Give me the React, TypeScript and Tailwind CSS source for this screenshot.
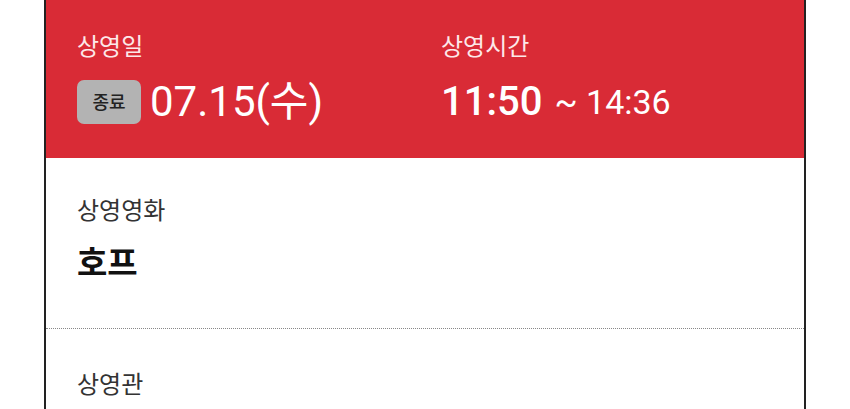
export default function App() {
  return (
    <div
      className="min-h-screen bg-white"
      style={{ fontFamily: 'Roboto, "Noto Sans CJK KR", sans-serif' }}
    >
      <div className="mx-[44px] h-[409px] border-x-2 border-[#222] bg-white">
        <div className="flex h-[158px] bg-[#d92b36] px-[31px] pt-[31px] text-white">
          <div className="w-[364px]">
            <p className="text-[24px] leading-[32px] text-[#fde8e9]">상영일</p>
            <div className="mt-[17px] flex items-center gap-[9px]">
              <span className="flex h-[44px] w-[64px] items-center justify-center rounded-[7px] bg-[#b3b3b3] text-[18px] font-medium text-[#222]">
                종료
              </span>
              <span className="text-[42px] leading-[44px]">07.15(수)</span>
            </div>
          </div>
          <div>
            <p className="text-[24px] leading-[32px] text-[#fde8e9]">상영시간</p>
            <div className="mt-[17px] flex h-[44px] items-center">
              <span className="text-[40px] font-medium leading-[44px]">11:50</span>
              <span className="ml-[12px] text-[34px] leading-[44px]">~ 14:36</span>
            </div>
          </div>
        </div>
        <div className="border-b border-dotted border-[#888] px-[31px] pb-[42px] pt-[37px]">
          <p className="text-[24px] leading-[32px] text-[#333]">상영영화</p>
          <p className="mt-[15px] text-[33px] font-bold leading-[44px] text-[#111]">호프</p>
        </div>
        <div className="px-[31px] pt-[40px]">
          <p className="text-[24px] leading-[32px] text-[#333]">상영관</p>
        </div>
      </div>
    </div>
  );
}
